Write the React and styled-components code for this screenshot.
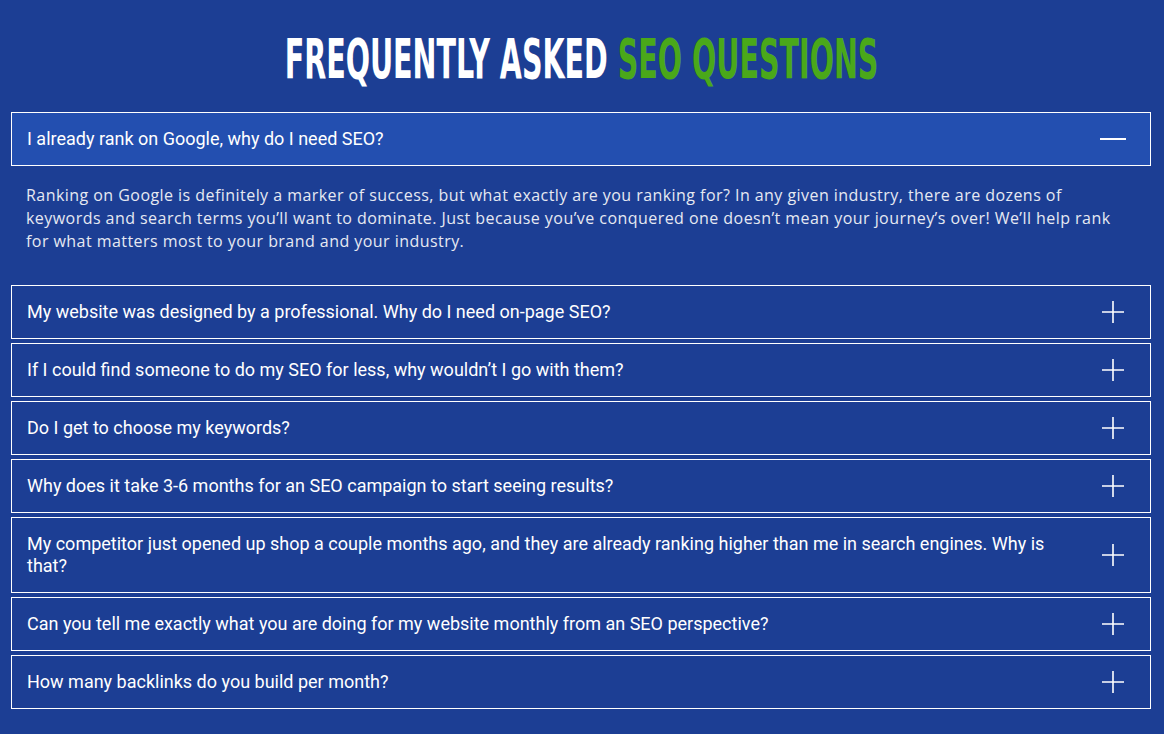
import React, { useState } from 'react';
import styled, { createGlobalStyle } from 'styled-components';

const GlobalStyle = createGlobalStyle`
  html, body {
    margin: 0;
    padding: 0;
    background: #1c3e94;
  }
`;

const Page = styled.div`
  min-height: 734px;
  background: #1c3e94;
  padding: 28px 13px 26px 11px;
  box-sizing: border-box;
`;

const Title = styled.h2`
  margin: 0 0 22px;
  text-align: center;
  font-family: "DejaVu Sans Condensed", "DejaVu Sans", sans-serif;
  font-weight: 700;
  font-size: 55px;
  line-height: 62px;
  color: #ffffff;
`;

const Squeeze = styled.span`
  display: inline-block;
  transform: scaleX(0.577);
  white-space: nowrap;
`;

const Accent = styled.span`
  color: #4aa81a;
`;

const List = styled.div`
  display: flex;
  flex-direction: column;
  gap: 4px;
`;

const Item = styled.div`
  display: flex;
  flex-direction: column;
`;

const Header = styled.button`
  display: flex;
  align-items: center;
  justify-content: space-between;
  width: 100%;
  box-sizing: border-box;
  padding: 15px 16px 15px 15px;
  border: 1px solid #ffffff;
  background: ${p => (p.$open ? '#234fb0' : '#1c3e94')};
  color: #ffffff;
  text-align: left;
  cursor: pointer;
  font-family: Roboto, "Liberation Sans", sans-serif;
  font-size: 18px;
  line-height: 22px;
  font-weight: 400;
`;

const Question = styled.span`
  flex: 1;
  padding-right: 50px;
`;

const IconBox = styled.span`
  width: 26px;
  height: 22px;
  margin-right: 8px;
  display: flex;
  align-items: center;
  justify-content: center;
  flex-shrink: 0;
`;

const Answer = styled.div`
  padding: 18px 15px 28px 15px;
  font-family: "Open Sans", "Liberation Sans", sans-serif;
  font-size: 16px;
  line-height: 23px;
  color: #e6e9f2;
  letter-spacing: 0.45px;
  white-space: nowrap;
`;

const faqs = [
  {
    q: 'I already rank on Google, why do I need SEO?',
    a: [
      'Ranking on Google is definitely a marker of success, but what exactly are you ranking for? In any given industry, there are dozens of',
      'keywords and search terms you\u2019ll want to dominate. Just because you\u2019ve conquered one doesn\u2019t mean your journey\u2019s over! We\u2019ll help rank',
      'for what matters most to your brand and your industry.',
    ],
  },
  { q: 'My website was designed by a professional. Why do I need on-page SEO?' },
  { q: 'If I could find someone to do my SEO for less, why wouldn\u2019t I go with them?' },
  { q: 'Do I get to choose my keywords?' },
  { q: 'Why does it take 3-6 months for an SEO campaign to start seeing results?' },
  {
    q: 'My competitor just opened up shop a couple months ago, and they are already ranking higher than me in search engines. Why is that?',
  },
  { q: 'Can you tell me exactly what you are doing for my website monthly from an SEO perspective?' },
  { q: 'How many backlinks do you build per month?' },
];

function PlusIcon() {
  return (
    <svg width="24" height="24" viewBox="0 0 24 24">
      <path d="M12 1v22M1 12h22" stroke="#ffffff" strokeWidth="1.6" fill="none" />
    </svg>
  );
}

function MinusIcon() {
  return (
    <svg width="26" height="26" viewBox="0 0 26 26">
      <path d="M0 13h26" stroke="#ffffff" strokeWidth="2" fill="none" />
    </svg>
  );
}

function App() {
  const [open, setOpen] = useState(0);

  return (
    <Page>
      <GlobalStyle />
      <Title>
        <Squeeze>
          FREQUENTLY ASKED <Accent>SEO QUESTIONS</Accent>
        </Squeeze>
      </Title>
      <List>
        {faqs.map((item, i) => (
          <Item key={i}>
            <Header $open={open === i} onClick={() => setOpen(open === i ? -1 : i)}>
              <Question>{item.q}</Question>
              <IconBox>{open === i ? <MinusIcon /> : <PlusIcon />}</IconBox>
            </Header>
            {open === i && item.a && (
              <Answer>
                {item.a.map((line, j) => (
                  <React.Fragment key={j}>
                    {line}
                    {j < item.a.length - 1 && <br />}
                  </React.Fragment>
                ))}
              </Answer>
            )}
          </Item>
        ))}
      </List>
    </Page>
  );
}

export default App;
